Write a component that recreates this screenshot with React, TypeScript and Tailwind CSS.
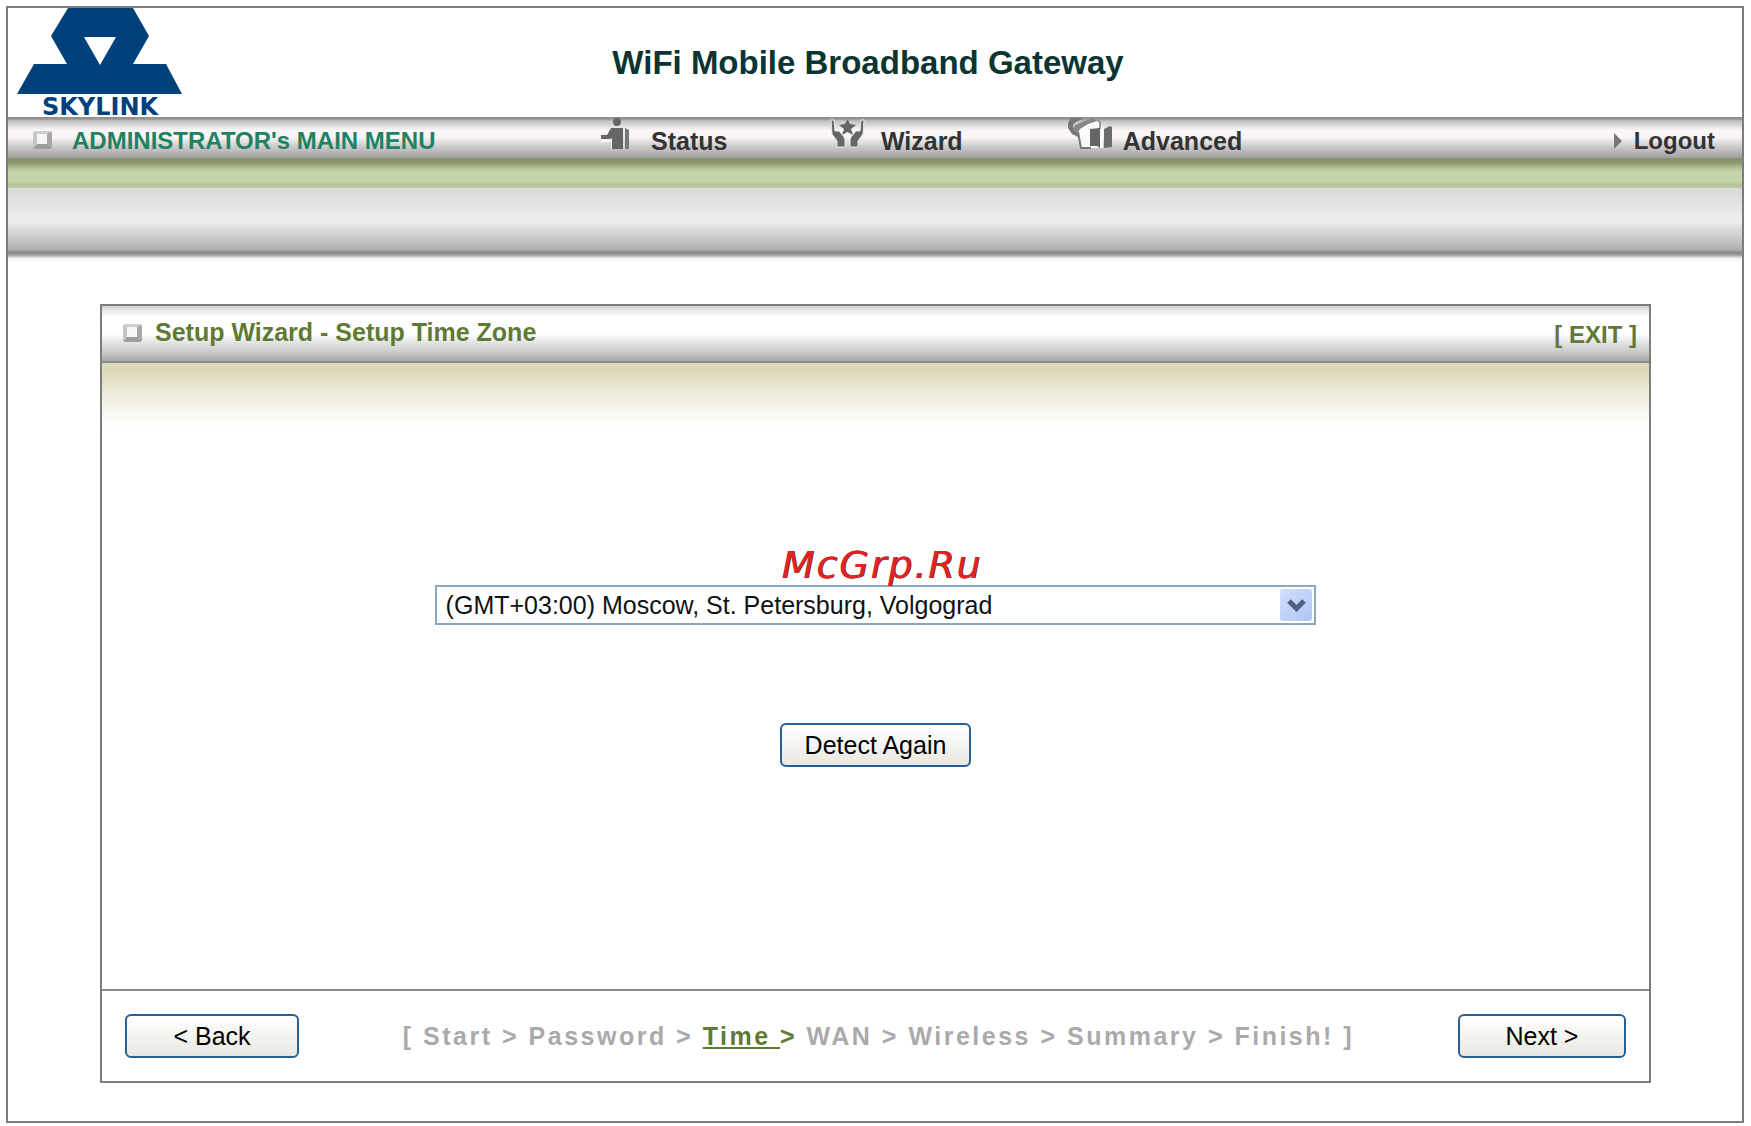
import React, { useState } from 'react';

const zones = [
  '(GMT+02:00) Athens, Istanbul, Minsk',
  '(GMT+03:00) Moscow, St. Petersburg, Volgograd',
  '(GMT+04:00) Baku, Tbilisi, Yerevan',
];

const steps = ['Start', 'Password', 'Time', 'WAN', 'Wireless', 'Summary', 'Finish!'];
const currentStep = 'Time';

const Logo = () => (
  <a href="#home" className="flex flex-col items-center text-[#00417b]">
    <svg className="block h-[86px] w-[166px]" viewBox="0 0 166 86" fill="currentColor" aria-hidden="true">
      <path
        fillRule="evenodd"
        d="M51 0H116L132 28L116 56H149L165 86H0L17 56H50L34 28ZM67 29L83 57L99 29Z"
      />
    </svg>
    <span className="mt-[3px] font-['DejaVu_Sans',sans-serif] text-[24px] leading-[20px] font-bold">SKYLINK</span>
  </a>
);

const StatusIcon = () => (
  <svg className="block h-8 w-8" viewBox="0 0 32 32" aria-hidden="true">
    <path d="M0 24H11V32" stroke="#f4f4f4" strokeWidth="2" fill="none" />
    <circle cx="16" cy="5" r="4" fill="#666" />
    <path d="M10 11H22V32H11V21L9 22H0V18H6Z" fill="#666" />
    <path d="M24 11L28 13V32H24Z" fill="#777" />
    <path d="M23 11V32" stroke="#ddd" strokeWidth="1" />
  </svg>
);

const WizardIcon = () => (
  <svg className="block h-8 w-9" viewBox="0 0 36 32" fill="#666" aria-hidden="true">
    <path
      d="M1 3H4L5 14H9L14 20L15 23V30H7V24L2 17ZM34 3H31L30 14H26L21 20L20 23V30H28V24L33 17Z"
      stroke="#e8e8e8"
      strokeWidth="1"
    />
    <path d="M17.500 2L20 7L26 8L21 12L23 18L17.500 15L12 18L14 12L9 8L15 7Z" />
  </svg>
);

const AdvancedIcon = () => (
  <svg className="block h-8 w-12" viewBox="0 0 48 32" aria-hidden="true">
    <path d="M12 15L18 8L32 3L37 11V31H15Z" fill="#fafafa" />
    <path d="M18 1H5L2 6V11L6 17L12 20V15L8 13L7 8L10 5Z" fill="#777" />
    <path d="M28 1L18 4L9 8L7 12L11 17L14 12L22 7L31 4Z" fill="#888" />
    <path d="M12 15L15 31H25" fill="none" stroke="#777" strokeWidth="2" />
    <path d="M29 2L34 5V12" fill="none" stroke="#999" strokeWidth="2" />
    <path d="M24 12L34 11V31L31 29H24Z" fill="#666" />
    <path d="M38 12L44 9L46 10V30L38 31Z" fill="#6c6c6c" />
  </svg>
);

const Bullet = () => (
  <span className="block h-[18px] w-[19px] shrink-0 rounded-[3px] border-t-[3px] border-r-[5px] border-b-[5px] border-l-[4px] border-t-[#cdcdcd] border-r-[#a8a8a8] border-b-[#9d9d9d] border-l-[#c6c6c6] bg-[#f6f6f6]" />
);

interface NavItemProps {
  label: string;
  icon: React.ReactNode;
  className: string;
}

const NavItem: React.FC<NavItemProps> = ({ label, icon, className }) => (
  <a href={`#${label.toLowerCase()}`} className={`flex items-start text-[25px] leading-[28px] text-[#333] ${className}`}>
    {icon}
    <span className="mt-[10px]">{label}</span>
  </a>
);

interface WizardButtonProps {
  className: string;
  children: React.ReactNode;
}

const WizardButton: React.FC<WizardButtonProps> = ({ className, children }) => (
  <button
    type="button"
    className={`h-[44px] rounded-[6px] border-2 border-[#2b5f93] bg-linear-to-b from-white via-[#f4f4f0] to-[#e8e7e0] text-[25px] leading-[28px] text-black ${className}`}
  >
    {children}
  </button>
);

export default function App() {
  const [zone, setZone] = useState(zones[1]);

  return (
    <div className="flex min-h-screen bg-white pt-[6px] pr-[7px] pb-[3px] pl-[6px] font-['Liberation_Sans',Arial,sans-serif]">
      <div className="flex flex-1 flex-col border-2 border-[#7d7d7d]">
        <header className="grid h-[109px] grid-cols-[184px_1fr_198px]">
          <Logo />
          <h1 className="mt-[36px] text-center text-[33px] leading-[38px] font-bold text-[#0a3532]">
            WiFi Mobile Broadband Gateway
          </h1>
        </header>

        <nav className="grid h-[41px] grid-cols-[342fr_132fr_136fr_390fr] bg-[linear-gradient(#8f8f8f_0px,#949494_2px,#c4c4c4_4px,#d9d8d9_8px,#faf6f8_13px,#faf6f8_20px,#cfcdce_29px,#a09ea0_41px)] font-bold">
          <div className="flex items-start pl-[25px]">
            <span className="mt-[14px]">
              <Bullet />
            </span>
            <span className="mt-[10px] ml-5 text-[24px] leading-[28px] whitespace-nowrap text-[#1f8261]">
              ADMINISTRATOR's MAIN MENU
            </span>
          </div>
          <NavItem label="Status" icon={<StatusIcon />} className="gap-[18px]" />
          <NavItem label="Wizard" icon={<WizardIcon />} className="gap-[15px]" />
          <div className="flex justify-between">
            <NavItem label="Advanced" icon={<AdvancedIcon />} className="gap-[9px]" />
            <a href="#logout" className="mt-[10px] mr-[27px] flex items-center gap-[12px] self-start text-[24px] leading-[28px] text-[#333]">
              <svg className="block h-4 w-2" viewBox="0 0 8 16" fill="#777" aria-hidden="true">
                <path d="M0 0L8 8L0 16Z" />
              </svg>
              Logout
            </a>
          </div>
        </nav>
        <div className="h-[30px] bg-[linear-gradient(#86936a_0px,#87936a_4px,#95a279_6px,#b5c296_10px,#c5d4a6_14px,#c5d4a6_24px,#b4bf9b_27px,#bfcd9f_30px)]" />
        <div className="h-[74px] bg-[linear-gradient(#dadada_0px,#e2e2e2_14px,#ececec_28px,#ececec_34px,#d6d6d6_44px,#c2c2c2_54px,#adadad_62px,#8a8a8a_64px,#929292_66px,#b4b4b4_68px,#efefef_70px,#ffffff_74px)]" />

        <main className="mr-[91px] mb-[38px] ml-[92px] mt-[42px] flex flex-1 flex-col border-2 border-[#7d7d7d]">
          <div className="flex h-[57px] items-start justify-between border-b-2 border-[#8c8a8c] bg-[linear-gradient(#cfcfcf_0px,#ebebeb_5px,#ffffff_11px,#ffffff_28px,#e6e5e6_36px,#cccbcc_46px,#a9a7a9_55px)] font-bold text-[#5f7a35]">
            <div className="flex items-start pl-[21px]">
              <span className="mt-[18px]">
                <Bullet />
              </span>
              <h2 className="mt-[12px] ml-[13px] text-[25px] leading-[28px]">Setup Wizard - Setup Time Zone</h2>
            </div>
            <a href="#exit" className="mt-[15px] mr-[12px] text-[24px] leading-[28px]">
              [ EXIT ]
            </a>
          </div>

          <div className="flex flex-1 flex-col items-center bg-[linear-gradient(#ddd8b7_0px,#dfdabc_10px,#e9e7d3_26px,#f3f3e8_42px,#fafaf7_54px,#ffffff_64px)] pt-[222px]">
            <div className="relative w-[57%]">
              <select
                aria-label="Time zone"
                value={zone}
                onChange={e => setZone(e.target.value)}
                className="block h-[40px] w-full appearance-none border-2 border-[#8aa8c2] bg-white pr-10 pl-[9px] text-[25px] leading-[30px] text-[#111]"
              >
                {zones.map(z => <option key={z}>{z}</option>)}
              </select>
              <span className="pointer-events-none absolute top-1 right-1 flex h-8 w-8 items-center justify-center rounded-[3px] bg-linear-to-br from-[#d3defb] to-[#adc6f6]">
                <svg className="block h-[13px] w-[19px]" viewBox="0 0 19 13" fill="none" stroke="#4d6185" strokeWidth="5" aria-hidden="true">
                  <path d="M2 2L9.500 9.500L17 2" />
                </svg>
              </span>
              <span className="pointer-events-none absolute bottom-[38px] left-[347px] font-['DejaVu_Sans',sans-serif] text-[38px] leading-[44px] tracking-wider text-[#df2424] italic [text-shadow:1px_0_0_#7a1818]">
                McGrp.Ru
              </span>
            </div>
            <WizardButton className="mt-[98px] w-[191px]">Detect Again</WizardButton>
          </div>

          <footer className="flex h-[92px] items-center justify-between border-t-2 border-[#8a8a8a] px-[23px]">
            <WizardButton className="w-[174px]">&lt; Back</WizardButton>
            <p className="text-[25px] leading-[28px] font-bold tracking-widest text-[#aaa]">
              {'[ '}
              {steps.map((s, i) => (
                <React.Fragment key={s}>
                  {s === currentStep ? (
                    <span className="text-[#5f7a35]">
                      <span className="underline decoration-2 underline-offset-2">{`${s} `}</span>
                      {'> '}
                    </span>
                  ) : (
                    `${s}${i < steps.length - 1 ? ' > ' : ''}`
                  )}
                </React.Fragment>
              ))}
              {' ]'}
            </p>
            <WizardButton className="w-[168px]">Next &gt;</WizardButton>
          </footer>
        </main>
      </div>
    </div>
  );
}
